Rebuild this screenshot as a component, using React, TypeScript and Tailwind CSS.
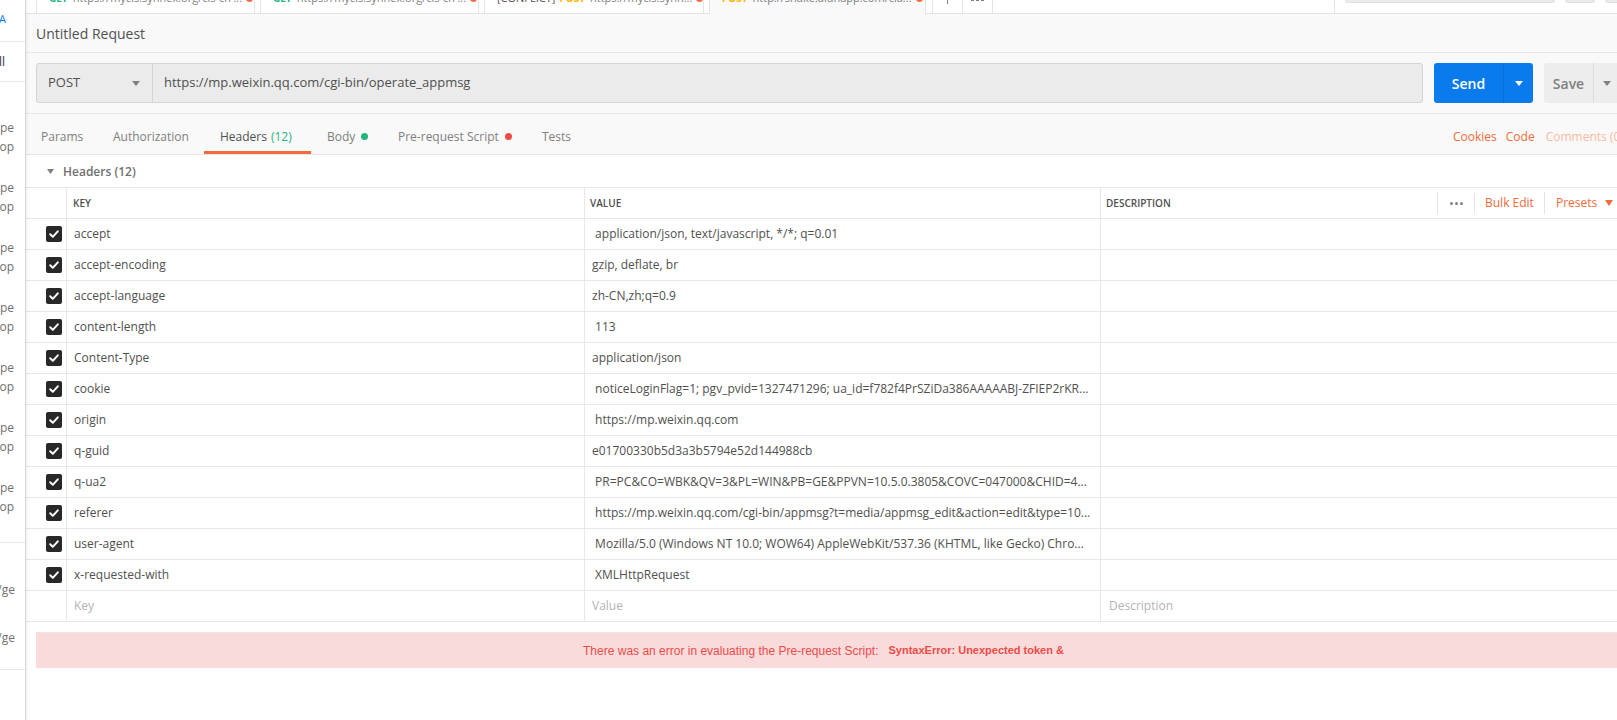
import React from "react";

const rows: [string, string][] = [
  ["accept", " application/json, text/javascript, */*; q=0.01"],
  ["accept-encoding", "gzip, deflate, br"],
  ["accept-language", "zh-CN,zh;q=0.9"],
  ["content-length", " 113"],
  ["Content-Type", "application/json"],
  ["cookie", " noticeLoginFlag=1; pgv_pvid=1327471296; ua_id=f782f4PrSZiDa386AAAAABJ-ZFIEP2rKR..."],
  ["origin", " https://mp.weixin.qq.com"],
  ["q-guid", "e01700330b5d3a3b5794e52d144988cb"],
  ["q-ua2", " PR=PC&CO=WBK&QV=3&PL=WIN&PB=GE&PPVN=10.5.0.3805&COVC=047000&CHID=4..."],
  ["referer", " https://mp.weixin.qq.com/cgi-bin/appmsg?t=media/appmsg_edit&action=edit&type=10..."],
  ["user-agent", " Mozilla/5.0 (Windows NT 10.0; WOW64) AppleWebKit/537.36 (KHTML, like Gecko) Chro..."],
  ["x-requested-with", " XMLHttpRequest"],
];

function Check() {
  return (
    <div className="w-[16px] h-[16px] rounded-[2px] bg-[#282828] flex items-center justify-center">
      <svg width="12" height="12" viewBox="0 0 12 12">
        <polyline points="2.2,6.3 4.8,8.8 9.8,3.3" fill="none" stroke="#ffffff" strokeWidth="2" strokeLinecap="round" strokeLinejoin="round" />
      </svg>
    </div>
  );
}

function Caret({ color, w = 8, h = 4 }: { color: string; w?: number; h?: number }) {
  return (
    <svg width={w} height={h} viewBox={`0 0 ${w} ${h}`}>
      <polygon points={`0,0 ${w},0 ${w / 2},${h}`} fill={color} />
    </svg>
  );
}

function TopTab({ method, methodColor, url, prefix, width, active }: { method: string; methodColor: string; url: string; prefix?: string; width: number; active?: boolean }) {
  return (
    <div
      className={`h-full border-x border-[#e3e3e3] shrink-0 overflow-hidden ${active ? "bg-[#f9f9f9]" : "bg-white border-b"}`}
      style={{ width }}
    >
      <div className="h-[30px] -mt-[17px] flex items-center pl-[12px] text-[11px] whitespace-nowrap">
        {prefix && <span className="text-[#505050] mr-[4px]">{prefix}</span>}
        <span className="text-[10px] font-bold mr-[5px]" style={{ color: methodColor }}>{method}</span>
        <span className="text-[#808080]">{url}</span>
        <span className="w-[7px] h-[7px] rounded-full bg-[#f26b3a] ml-[4px] shrink-0" />
      </div>
    </div>
  );
}

function Gap({ w }: { w: number }) {
  return <div className="h-full border-b border-[#e3e3e3] shrink-0" style={{ width: w }} />;
}

export default function App() {
  return (
    <div className="w-[1617px] h-[720px] flex overflow-hidden bg-white font-['Open_Sans',sans-serif] text-[#505050]">
      {/* sidebar */}
      <div className="w-[26px] shrink-0 border-r border-[#d9d9d9] shadow-[1px_0_3px_rgba(0,0,0,0.08)] bg-white flex flex-col text-[12px] relative z-10">
        <div className="h-[42px] border-b border-[#e6e6e6] flex items-center">
          <span className="text-[#097bed] text-[11px] -ml-[1px] mt-[-2px]">A</span>
        </div>
        <div className="h-[40px] border-b border-[#e6e6e6] flex items-center">
          <span className="text-[#333] text-[12px] -ml-[1px]">ll</span>
        </div>
        <div className="pt-[36px] flex flex-col">
          {[0, 1, 2, 3, 4, 5, 6].map((i) => (
            <div key={i} className="h-[60px] flex flex-col leading-[19px] text-[#707070]">
              <div className="w-[14px] overflow-hidden flex justify-end whitespace-nowrap">pe</div>
              <div className="w-[14px] overflow-hidden flex justify-end whitespace-nowrap">op</div>
            </div>
          ))}
        </div>
        <div className="mt-[4px] border-b border-[#e6e6e6]" />
        <div className="pt-[37px] leading-[19px] text-[#707070]">
          <div className="w-[15px] overflow-hidden flex justify-end whitespace-nowrap">/ge</div>
          <div className="mt-[29px] w-[15px] overflow-hidden flex justify-end whitespace-nowrap">/ge</div>
        </div>
        <div className="mt-[22px] border-b border-[#e6e6e6]" />
      </div>

      {/* main */}
      <div className="flex-1 flex flex-col min-w-0">
        {/* top tabs bar */}
        <div className="h-[14px] flex overflow-hidden bg-white shrink-0">
          <Gap w={10} />
          <TopTab method="GET" methodColor="#26b47f" url="https://mycis.synnex.org/cis-ci7..." width={219} />
          <Gap w={5} />
          <TopTab method="GET" methodColor="#26b47f" url="https://mycis.synnex.org/cis-ci7..." width={219} />
          <Gap w={5} />
          <TopTab prefix="[CONFLICT]" method="POST" methodColor="#ffb400" url="https://mycis.synn..." width={220} />
          <Gap w={5} />
          <TopTab method="POST" methodColor="#ffb400" url="http://shake.aidnapp.com/cla..." width={217} active />
          <div className="w-[6px] h-full border-b border-[#e3e3e3] shrink-0" />
          <div className="w-[31px] h-full border-x border-b border-[#e3e3e3] flex justify-center shrink-0">
            <div className="w-[1px] h-[4px] bg-[#808080]" />
          </div>
          <div className="w-[30px] h-full border-r border-b border-[#e3e3e3] flex justify-center gap-[2px] shrink-0">
            <div className="w-[3px] h-[1px] bg-[#808080]" />
            <div className="w-[3px] h-[1px] bg-[#808080]" />
            <div className="w-[3px] h-[1px] bg-[#808080]" />
          </div>
          <div className="w-[342px] h-full border-b border-r border-[#e3e3e3] shrink-0" />
          <div className="flex-1 h-full border-b border-[#e3e3e3] flex items-start pl-[10px]">
            <div className="w-[210px] h-[3px] bg-[#ebebeb] rounded-b-[3px] border-b border-x border-[#e0e0e0] shrink-0" />
            <div className="w-[30px] h-[3px] ml-[10px] bg-[#ebebeb] rounded-b-[3px] border-b border-x border-[#e0e0e0] shrink-0" />
            <div className="w-[30px] h-[3px] ml-[10px] bg-[#ebebeb] rounded-b-[3px] border-b border-x border-[#e0e0e0] shrink-0" />
          </div>
        </div>

        {/* request header area */}
        <div className="bg-[#f9f9f9] shrink-0">
          <div className="h-[39px] border-b border-[#e6e6e6] flex items-center pl-[10px] text-[14px] text-[#505050]">
            Untitled Request
          </div>
          <div className="h-[61px] border-b border-[#e6e6e6] flex items-center pl-[10px]">
            <div className="flex h-[40px] w-[1387px] shrink-0 border border-[#d4d4d4] rounded-[3px] bg-[#ebebeb]">
              <div className="w-[116px] h-full border-r border-[#d4d4d4] flex items-center pl-[11px] pr-[12px] text-[13px] text-[#505050]">
                <span className="flex-1">POST</span>
                <Caret color="#808080" w={8} h={5} />
              </div>
              <div className="flex-1 flex items-center pl-[11px] text-[13px] text-[#505050]">
                https://mp.weixin.qq.com/cgi-bin/operate_appmsg
              </div>
            </div>
            <div className="ml-[11px] flex h-[40px] w-[99px] shrink-0 rounded-[3px] bg-[#097bed] text-white">
              <div className="w-[70px] flex items-center justify-center text-[14px] font-semibold border-r border-[#0a6fd4]">Send</div>
              <div className="flex-1 flex items-center justify-center">
                <Caret color="#ffffff" w={8} h={5} />
              </div>
            </div>
            <div className="ml-[11px] flex h-[40px] w-[100px] shrink-0 rounded-l-[3px] bg-[#ededed] text-[#808080]">
              <div className="w-[50px] flex items-center justify-center text-[14px] font-semibold border-r border-[#dcdcdc]">Save</div>
              <div className="w-[26px] flex items-center justify-center">
                <Caret color="#808080" w={8} h={5} />
              </div>
            </div>
          </div>
          {/* tabs */}
          <div className="h-[41px] border-b border-[#e6e6e6] flex text-[12px] whitespace-nowrap">
            <div className="w-[72px] pl-[15px] flex items-center pt-[5px] text-[#808080] shrink-0">Params</div>
            <div className="w-[106px] pl-[15px] flex items-center pt-[5px] text-[#808080] shrink-0">Authorization</div>
            <div className="w-[107px] pl-[16px] flex items-center pt-[8px] border-b-[3px] border-[#f26b3a] text-[#505050] shrink-0">
              Headers<span className="text-[#26b47f] ml-[4px]">(12)</span>
            </div>
            <div className="w-[72px] pl-[16px] flex items-center pt-[5px] text-[#808080] shrink-0">
              Body<span className="ml-[6px] w-[7px] h-[7px] rounded-full bg-[#26b47f]" />
            </div>
            <div className="w-[144px] pl-[15px] flex items-center pt-[5px] text-[#808080] shrink-0">
              Pre-request Script<span className="ml-[6px] w-[7px] h-[7px] rounded-full bg-[#ed4b48]" />
            </div>
            <div className="pl-[15px] flex items-center pt-[5px] text-[#808080] shrink-0">Tests</div>
            <div className="flex-1" />
            <div className="w-[164px] shrink-0 flex items-center pt-[5px] overflow-hidden">
              <span className="text-[#f26b3a]">Cookies</span>
              <span className="text-[#f26b3a] ml-[9px]">Code</span>
              <span className="text-[#f9b9a0] ml-[11px]">Comments (0)</span>
            </div>
          </div>
        </div>

        {/* headers section */}
        <div className="flex-1 bg-white flex flex-col">
          <div className="h-[33px] border-b border-[#e6e6e6] flex items-center pl-[21px] pt-[1px] text-[12px] shrink-0">
            <Caret color="#808080" w={7} h={5} />
            <span className="ml-[9px] font-semibold text-[#707070]">Headers (12)</span>
          </div>
          <div className="grid grid-cols-[40px_518px_516px_1fr]">
            {/* header row */}
            <div className="h-[31px] border-b border-[#e8e8e8]" />
            <div className="h-[31px] border-b border-l border-[#e8e8e8] flex items-center pl-[6px] text-[10px] font-semibold text-[#505050]">KEY</div>
            <div className="h-[31px] border-b border-l border-[#e8e8e8] flex items-center pl-[5px] text-[10px] font-semibold text-[#505050]">VALUE</div>
            <div className="h-[31px] border-b border-l border-[#e8e8e8] flex items-center pl-[5px] text-[10px] font-semibold text-[#505050] overflow-hidden">
              <span className="flex-1">DESCRIPTION</span>
              <div className="h-[22px] border-l border-[#e3e3e3] w-[37px] shrink-0 flex items-center justify-center gap-[2px]">
                <span className="w-[3px] h-[3px] rounded-full bg-[#808080]" />
                <span className="w-[3px] h-[3px] rounded-full bg-[#808080]" />
                <span className="w-[3px] h-[3px] rounded-full bg-[#808080]" />
              </div>
              <div className="h-[20px] border-l border-[#e3e3e3] w-[70px] shrink-0 flex items-center pl-[10px] text-[12px] font-normal text-[#f26b3a] whitespace-nowrap">Bulk Edit</div>
              <div className="h-[22px] border-l border-[#e3e3e3] w-[73px] shrink-0 flex items-center pl-[11px] text-[12px] font-normal text-[#f26b3a] whitespace-nowrap">
                Presets
                <span className="ml-[8px]"><Caret color="#f26b3a" w={8} h={6} /></span>
              </div>
            </div>
            {rows.map(([k, v]) => (
              <React.Fragment key={k}>
                <div className="h-[31px] border-b border-[#e8e8e8] flex items-center justify-end pr-[4px]">
                  <Check />
                </div>
                <div className="h-[31px] border-b border-l border-[#e8e8e8] flex items-center pl-[7px] text-[12px] text-[#505050] whitespace-nowrap overflow-hidden">{k}</div>
                <div className="h-[31px] border-b border-l border-[#e8e8e8] flex items-center pl-[7px] text-[12px] text-[#505050] whitespace-pre overflow-hidden">{v}</div>
                <div className="h-[31px] border-b border-l border-[#e8e8e8]" />
              </React.Fragment>
            ))}
            <div className="h-[31px] border-b border-[#e8e8e8]" />
            <div className="h-[31px] border-b border-l border-[#e8e8e8] flex items-center pl-[7px] text-[12px] text-[#b3b3b3]">Key</div>
            <div className="h-[31px] border-b border-l border-[#e8e8e8] flex items-center pl-[7px] text-[12px] text-[#b3b3b3]">Value</div>
            <div className="h-[31px] border-b border-l border-[#e8e8e8] flex items-center pl-[8px] text-[12px] text-[#b3b3b3]">Description</div>
          </div>
          <div className="mt-[10px] ml-[10px] h-[36px] bg-[#f9dbdb] border-t border-[#f3e3e3] flex items-center justify-center pr-[6px] font-['Liberation_Sans',Arial,sans-serif] text-[12px] text-[#ed4b48] whitespace-nowrap">
            <span>There was an error in evaluating the Pre-request Script:</span>
            <span className="font-bold ml-[10px] text-[11px]">SyntaxError: Unexpected token &amp;</span>
          </div>
        </div>
      </div>
    </div>
  );
}
